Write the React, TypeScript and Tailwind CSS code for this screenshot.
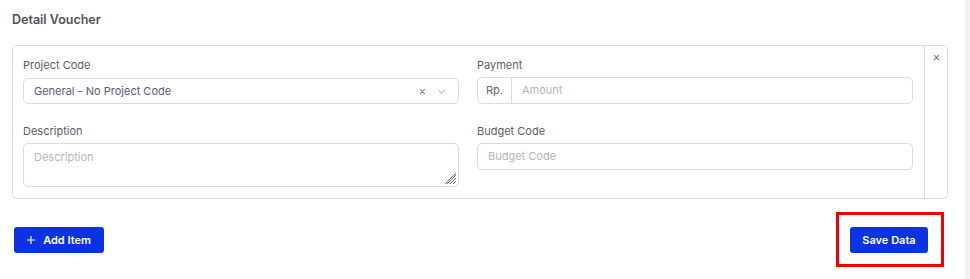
import React from "react";

function XIcon({ className }: { className?: string }) {
  return (
    <svg viewBox="0 0 10 10" className={className} fill="none" stroke="currentColor" strokeWidth="1.6" strokeLinecap="round">
      <path d="M2 2 L8 8 M8 2 L2 8" />
    </svg>
  );
}

export default function App() {
  const font = { fontFamily: "Inter, 'Noto Sans', sans-serif" };
  return (
    <div className="flex w-[970px] h-[279px] bg-white overflow-hidden" style={font}>
      <div className="flex-1 flex flex-col pl-[12px] pr-[17px]">
        <div className="shrink-0 pt-[13px] text-[12.5px] leading-[14px] font-semibold text-[#50505c]">Detail Voucher</div>
        <div className="shrink-0 mt-[18px] flex border border-[#dcdcdc] rounded-[4px] h-[154px]">
          <div className="flex-1 pl-[10px] pr-[11px] pt-[12px]">
            <div className="grid grid-cols-2 gap-x-[18px]">
              <div>
                <div className="text-[11px] leading-[14px] text-[#5c5c6a]">Project Code</div>
                <div className="mt-[6px] h-[26px] border border-[#dcdcdc] rounded-[5px] flex items-center pl-[10px] pr-[12px]">
                  <span className="flex-1 text-[11px] text-[#585878]">General - No Project Code</span>
                  <XIcon className="w-[7px] h-[7px] text-[#8a8aa0]" />
                  <svg viewBox="0 0 10 6" className="ml-[11px] w-[9px] h-[5px]" fill="none" stroke="#8a8a9a" strokeWidth="1">
                    <path d="M1 1 L5 5 L9 1" />
                  </svg>
                </div>
              </div>
              <div>
                <div className="text-[11px] leading-[14px] text-[#5c5c6a]">Payment</div>
                <div className="mt-[5px] h-[27px] border border-[#dcdcdc] rounded-[5px] flex items-stretch">
                  <div className="w-[34px] border-r border-[#dcdcdc] flex items-center justify-center text-[11px] font-normal text-[#666674]">Rp.</div>
                  <div className="flex items-center pl-[10px] text-[11px] text-[#b4b4c0]">Amount</div>
                </div>
              </div>
              <div className="mt-[20px]">
                <div className="text-[11px] leading-[14px] text-[#5c5c6a]">Description</div>
                <div className="relative mt-[5px] h-[44px] border border-[#dcdcdc] rounded-[5px] pl-[10px] pt-[6px] text-[11px] leading-[14px] text-[#b4b4c0]">
                  Description
                  <svg viewBox="0 0 12 12" className="absolute right-[1px] bottom-[1px] w-[12px] h-[12px]" stroke="#555" strokeWidth="0.9">
                    <path d="M11 2 L2 11 M11 5 L5 11 M11 8 L8 11 M11 0 L0 11" />
                  </svg>
                </div>
              </div>
              <div className="mt-[20px]">
                <div className="text-[11px] leading-[14px] text-[#5c5c6a]">Budget Code</div>
                <div className="mt-[5px] h-[27px] border border-[#dcdcdc] rounded-[5px] flex items-center pl-[10px] text-[11px] text-[#b4b4c0]">Budget Code</div>
              </div>
            </div>
          </div>
          <div className="w-[23px] border-l border-[#dcdcdc] flex justify-center pt-[8px]">
            <XIcon className="w-[7px] h-[7px] text-[#7a7a90]" />
          </div>
        </div>
        <div className="shrink-0 mt-[13px] flex items-start justify-between">
          <button className="ml-[2px] mt-[15px] h-[26px] w-[90px] rounded-[3px] bg-[#0b33e3] text-white text-[11px] font-semibold flex items-center justify-center gap-[8px]">
            <svg viewBox="0 0 10 10" className="w-[8px] h-[8px]" stroke="white" strokeWidth="1.4">
              <path d="M5 0 V10 M0 5 H10" />
            </svg>
            Add Item
          </button>
          <div className="mr-[4px] border-[3px] border-[#f00000] w-[108px] h-[55px] pl-[11px] pt-[12px]">
            <button className="h-[26px] w-[78px] rounded-[3px] bg-[#0b33e3] text-white text-[11px] font-semibold flex items-center justify-center">
              Save Data
            </button>
          </div>
        </div>
      </div>
      <div className="w-[5px] bg-[#f2f2f4]" />
    </div>
  );
}
